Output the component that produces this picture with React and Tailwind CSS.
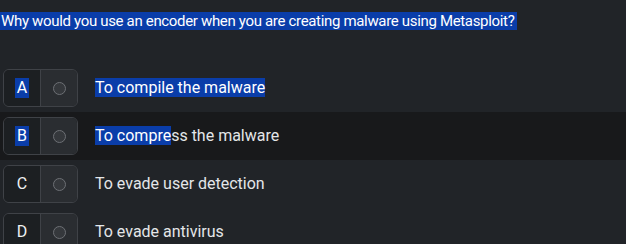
const sel = "bg-[#0a3da9]";

const options = [
  { key: "A", pre: "To compile the malware ", post: "", letterSel: true },
  { key: "B", pre: "To compre", post: "ss the malware", letterSel: true, hover: true },
  { key: "C", pre: "", post: "To evade user detection" },
  { key: "D", pre: "", post: "To evade antivirus" },
];

function Option({ opt }) {
  return (
    <div className={"flex items-center h-12 pl-[3px] " + (opt.hover ? "bg-[#18191b]" : "")}>
      <div className="flex h-[38px] w-[75px] rounded-[6px] border border-[#3f4247] overflow-hidden">
        <div className="w-[37px] flex items-center justify-center bg-[#1c1f22] border-r border-[#3f4247] text-[#eef0f2] text-[16px]">
          <span className={"leading-[20px] px-[2px] " + (opt.letterSel ? sel + " text-white" : "")}>{opt.key}</span>
        </div>
        <div className="flex-1 flex items-center justify-center bg-[#2a2d31]">
          <span className="w-[13px] h-[13px] rounded-full border-[1.5px] border-[#6d7075] bg-[#35383c]" />
        </div>
      </div>
      <div className="ml-[17px] text-[16px] leading-[24px] whitespace-nowrap text-[#e4e6e8]">
        {opt.pre && <span className={sel + " text-white"}>{opt.pre}</span>}
        <span>{opt.post}</span>
      </div>
    </div>
  );
}

export default function App() {
  return (
    <div
      className="bg-[#212428] h-[244px] overflow-hidden"
      style={{ fontFamily: 'Roboto, "Noto Sans", sans-serif' }}
    >
      <div className="pt-[10px] h-[64px] text-[15px] tracking-[-0.33px] leading-[23px] whitespace-nowrap">
        <span className={sel + " text-white pl-px pr-[3px]"}>
          Why would you use an encoder when you are creating malware using Metasploit?
        </span>
      </div>
      {options.map((o) => (
        <Option key={o.key} opt={o} />
      ))}
    </div>
  );
}
